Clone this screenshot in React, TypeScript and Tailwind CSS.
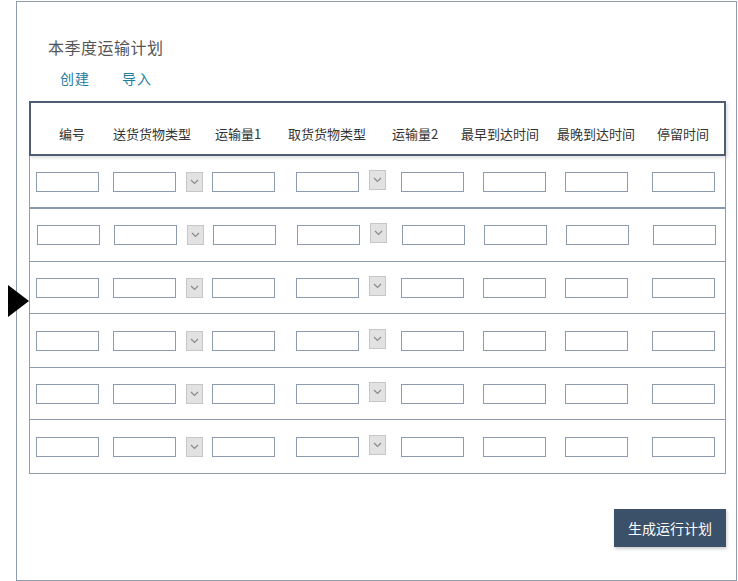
import React from 'react'

const headers: { label: string; w: number }[] = [
  { label: '编号', w: 82 },
  { label: '送货货物类型', w: 78 },
  { label: '运输量1', w: 94 },
  { label: '取货货物类型', w: 84 },
  { label: '运输量2', w: 92 },
  { label: '最早到达时间', w: 78 },
  { label: '最晚到达时间', w: 114 },
  { label: '停留时间', w: 60 }
]

// row heights and small horizontal drift, like the hand-laid wireframe
const rows = [
  { h: 53, dx: 0 },
  { h: 53, dx: 1 },
  { h: 52, dx: 0 },
  { h: 54, dx: 0 },
  { h: 52, dx: 0 },
  { h: 54, dx: 0 }
]

function Field({ ml }: { ml: number }) {
  return (
    <div
      className="w-[63px] h-[20px] shrink-0 border border-[#8d9bb1] bg-white"
      style={{ marginLeft: ml }}
    />
  )
}

function Drop({ ml, up }: { ml: number; up?: boolean }) {
  return (
    <div
      className={
        'w-[17px] h-[20px] shrink-0 flex items-center justify-center border border-[#c6c6c6] bg-[#e2e2e2] ' +
        (up ? '-translate-y-[2px]' : '')
      }
      style={{ marginLeft: ml }}
    >
      <svg width="9" height="6" viewBox="0 0 9 6" fill="none">
        <path d="M1 1l3.5 3.5L8 1" stroke="#8a8a8a" strokeWidth="1.2" />
      </svg>
    </div>
  )
}

function Row({ h, dx, first }: { h: number; dx: number; first?: boolean }) {
  return (
    <div
      className={
        'w-[697px] flex items-center border-x border-[#8d9bb1] ' +
        (first ? 'border-b-2 border-b-[#8797ad]' : 'border-b')
      }
      style={{ height: h }}
    >
      <Field ml={6 + dx} />
      <Field ml={14} />
      <Drop ml={10} />
      <Field ml={9} />
      <Field ml={21} />
      <Drop ml={10} up />
      <Field ml={15} />
      <Field ml={19} />
      <Field ml={19} />
      <Field ml={24} />
    </div>
  )
}

export default function App() {
  return (
    <div
      className="relative w-[738px] h-[581px] bg-white text-[#333]"
      style={{ fontFamily: '"Microsoft YaHei", "Noto Sans CJK SC", "Noto Sans", sans-serif' }}
    >
      <div className="ml-[16px] mt-[1px] w-[721px] h-[580px] border border-[#8e9cb1] flex flex-col">
        <div className="ml-[31px] mt-[35px] text-[16px] leading-[20px] text-[#555] tracking-[0.5px]">
          本季度运输计划
        </div>
        <div className="ml-[43px] mt-[11px] flex gap-[32px] text-[14px] leading-[20px] text-[#1d7d9e] tracking-[1px]">
          <span>创建</span>
          <span>导入</span>
        </div>

        <div className="ml-[12px] mt-[13px] flex flex-col">
          <div className="w-[697px] h-[55px] border-2 border-[#4d5e74] flex items-center pt-[10px] text-[13px] shadow-[2px_2px_3px_rgba(0,0,0,0.12)]">
            {headers.map((c) => (
              <div
                key={c.label}
                className="shrink-0 flex justify-center whitespace-nowrap"
                style={{ width: c.w }}
              >
                {c.label}
              </div>
            ))}
          </div>
          {rows.map((r, i) => (
            <Row key={i} h={r.h} dx={r.dx} first={i === 0} />
          ))}
        </div>

        <div className="flex justify-end mt-[35px] mr-[10px]">
          <button className="w-[112px] h-[38px] bg-[#3b5169] text-white text-[14px] shadow-[1px_2px_3px_rgba(0,0,0,0.2)]">
            生成运行计划
          </button>
        </div>
      </div>

      <div className="absolute left-[8px] top-[284px] w-0 h-0 border-y-[16px] border-y-transparent border-l-[21px] border-l-black" />
    </div>
  )
}
